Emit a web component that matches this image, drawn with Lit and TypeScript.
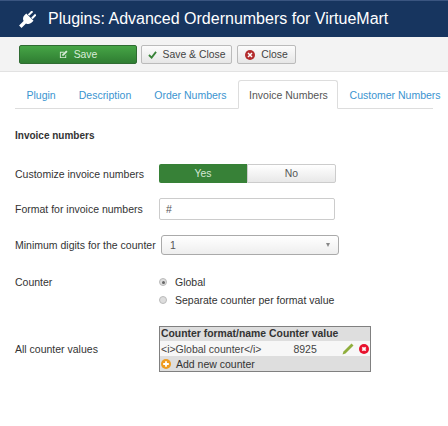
import { LitElement, html, css } from "lit";
import { customElement } from "lit/decorators.js";

@customElement("app-root")
export class AppRoot extends LitElement {
  static styles = css`
    :host { display: block; width: 448px; height: 426px; background: #fff; overflow: hidden; font-family: "Liberation Sans", Arial, sans-serif; color: #333; font-size: 10.5px; }
    .head { box-sizing: border-box; height: 37px; background: #17355f; border-top: 1px solid #3a5580; display: flex; align-items: center; padding-left: 19px; gap: 12px; color: #fff; font-size: 16px; white-space: nowrap; }
    .head svg { width: 17px; height: 17px; }
    .bar { height: 35px; background: #f3f3f3; border-bottom: 1px solid #e2e2e2; box-sizing: border-box; display: flex; align-items: flex-start; padding: 8px 0 0 19px; gap: 4px; }
    .btn { height: 19px; box-sizing: border-box; border: 1px solid #bbb; border-radius: 2px; background: linear-gradient(#fcfcfc, #e6e6e6); display: flex; align-items: center; justify-content: center; gap: 6px; font-size: 10.4px; color: #444; white-space: nowrap; }
    .save { width: 118px; background: linear-gradient(#46a546, #2f7d32); border-color: #2f6b32; color: #d8ecd8; }
    .sc { width: 91px; }
    .close { width: 59px; margin-left: 1px; }
    .tabs { display: flex; margin: 8px 0 0 15px; width: 418px; height: 28px; border-bottom: 1px solid #ddd; font-size: 10.5px; color: #3a94d0; }
    .tab { display: flex; align-items: center; box-sizing: border-box; height: 29px; padding: 0 11.5px; white-space: nowrap; }
    .tab.on { background: #fff; color: #555; border: 1px solid #ddd; border-bottom-color: #fff; border-radius: 3px 3px 0 0; width: 100px; padding: 0 10px; }
    h4 { margin: 0; padding: 20px 0 0 15px; height: 14px; font-size: 10px; line-height: 14px; font-weight: bold; color: #333; }
    .row { display: grid; grid-template-columns: 144px 1fr; padding-left: 15px; align-items: center; white-space: nowrap; }
    .m15 { margin-top: 15px; }
    .m20 { margin-top: 20px; }
    .m21 { margin-top: 21px; }
    .top { align-items: start; }
    .top > span { line-height: 12px; }
    .toggle { display: flex; width: 177px; height: 19px; }
    .yes { flex: 0 0 88px; background: #378137; border-radius: 2px 0 0 2px; color: #d5e8d5; display: flex; align-items: center; justify-content: center; font-size: 10.4px; }
    .no { flex: 1; box-sizing: border-box; border: 1px solid #ccc; border-radius: 0 2px 2px 0; background: linear-gradient(#fff, #e8e8e8); display: flex; align-items: center; justify-content: center; font-size: 10.4px; color: #555; }
    .input { width: 176px; height: 22px; box-sizing: border-box; border: 1px solid #ccc; border-radius: 2px; padding-left: 6px; display: flex; align-items: center; color: #555; }
    .select { margin-left: 2px; width: 178px; height: 20px; box-sizing: border-box; border: 1px solid #aaa; border-radius: 3px; background: linear-gradient(#fff, #eee); padding: 0 8px; display: flex; align-items: center; justify-content: space-between; color: #555; }
    .arrow { width: 0; height: 0; border: 2.5px solid transparent; border-top: 4px solid #888; border-bottom: 0; }
    .radios { display: flex; flex-direction: column; gap: 6px; align-self: start; }
    .radio { display: flex; align-items: center; gap: 8px; height: 12px; }
    .dot { width: 8px; height: 8px; border-radius: 50%; box-sizing: border-box; border: 1px solid #bbb; background: #ddd; display: flex; align-items: center; justify-content: center; }
    .dot i { width: 3px; height: 3px; border-radius: 50%; background: #666; }
    .table { width: 212px; height: 46px; box-sizing: border-box; border: 1px solid #808080; background: #dedede; }
    .trow { display: flex; align-items: center; padding-left: 1px; }
    .th { height: 14px; font-weight: bold; line-height: 14px; color: #333; gap: 3px; font-size: 10.4px; }
    .td { height: 15px; background: #f7f7f7; color: #444; }
    .td .n { margin-left: 32px; }
    .td svg.e { margin-left: 25px; }
    .td svg.x { margin-left: 5px; }
    .add { display: flex; align-items: center; gap: 5px; height: 15px; padding-left: 1px; }
  `;

  render() {
    return html`
      <div class="head">
        <svg viewBox="0 0 20 20"><g transform="rotate(45 10 10)" fill="#fff"><rect x="6" y="-1" width="2.400" height="6.500"/><rect x="11.600" y="-1" width="2.400" height="6.500"/><path d="M4 6h12v3a6 6 0 0 1-4 5.500V22H8v-7.500A6 6 0 0 1 4 9z"/></g></svg>
        <span>Plugins: Advanced Ordernumbers for VirtueMart</span>
      </div>
      <div class="bar">
        <div class="btn save">
          <svg width="9" height="9" viewBox="0 0 10 10"><path fill="#d8ecd8" d="M1 2h5L5 3H2v5h5V6l1-1v4H1z"/><path fill="#d8ecd8" d="M8 .5L9.500 2 5 6.500H3.500V5z"/></svg>
          <span>Save</span>
        </div>
        <div class="btn sc">
          <svg width="9" height="8" viewBox="0 0 10 9"><path fill="none" stroke="#378137" stroke-width="2" d="M1 4.500L4 7.500 9 1"/></svg>
          <span>Save &amp; Close</span>
        </div>
        <div class="btn close">
          <svg width="10" height="10" viewBox="0 0 10 10"><circle cx="5" cy="5" r="5" fill="#b32d2e"/><path stroke="#fff" stroke-width="1.500" d="M3 3l4 4M7 3l-4 4"/></svg>
          <span>Close</span>
        </div>
      </div>
      <div class="tabs">
        <div class="tab">Plugin</div>
        <div class="tab">Description</div>
        <div class="tab">Order Numbers</div>
        <div class="tab on">Invoice Numbers</div>
        <div class="tab">Customer Numbers</div>
      </div>
      <h4>Invoice numbers</h4>
      <div class="row m21"><span>Customize invoice numbers</span>
        <div class="toggle"><div class="yes">Yes</div><div class="no">No</div></div>
      </div>
      <div class="row m15"><span>Format for invoice numbers</span><div class="input">#</div></div>
      <div class="row m15"><span>Minimum digits for the counter</span>
        <div class="select"><span>1</span><i class="arrow"></i></div>
      </div>
      <div class="row top m21"><span>Counter</span>
        <div class="radios">
          <div class="radio"><span class="dot"><i></i></span><span>Global</span></div>
          <div class="radio"><span class="dot"></span><span>Separate counter per format value</span></div>
        </div>
      </div>
      <div class="row m20"><span>All counter values</span>
        <div class="table">
          <div class="trow th"><span>Counter format/name</span><span>Counter value</span></div>
          <div class="trow td"><span>&lt;i&gt;Global counter&lt;/i&gt;</span><span class="n">8925</span>
            <svg class="e" width="12" height="12" viewBox="0 0 12 12"><path fill="#8fae3c" d="M9.500 .5L11.500 2.500 3.500 10.500 .5 11.500l1-3z"/></svg>
            <svg class="x" width="10" height="10" viewBox="0 0 10 10"><circle cx="5" cy="5" r="5" fill="#e8112d"/><path stroke="#fff" stroke-width="1.800" d="M3.300 3.300l3.400 3.400M6.700 3.300l-3.400 3.400"/></svg>
          </div>
          <div class="add">
            <svg width="10" height="10" viewBox="0 0 10 10"><circle cx="5" cy="5" r="5" fill="#ef9b1f"/><path stroke="#fff" stroke-width="1.800" d="M5 2.200v5.600M2.200 5h5.600"/></svg>
            <span>Add new counter</span>
          </div>
        </div>
      </div>
    `;
  }
}
